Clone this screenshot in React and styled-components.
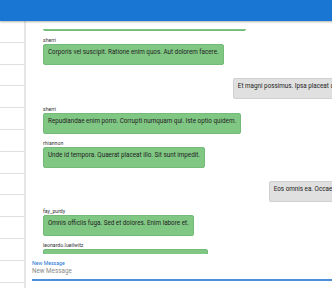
import React, { useLayoutEffect, useRef } from 'react'
import styled, { createGlobalStyle } from 'styled-components'

const GlobalStyle = createGlobalStyle`
    html, body {
        margin: 0;
        padding: 0;
        overflow: hidden;
        background: #fff;
    }
    body {
        font-family: Roboto, "Liberation Sans", sans-serif;
    }
`

const Page = styled.div`
    width: 422px;
    height: 288px;
    display: flex;
    flex-direction: column;
`

const AppBar = styled.header`
    height: 21px;
    flex-shrink: 0;
    background-color: #1976d2;
    box-shadow: 0 1px 2px rgba(0, 0, 0, 0.3);
    position: relative;
    z-index: 1;
`

const Body = styled.div`
    flex: 1;
    display: flex;
    min-height: 0;
`

const Sidebar = styled.nav`
    width: 24px;
    flex-shrink: 0;
    border-right: 2px solid #e6e6e6;
    display: flex;
    flex-direction: column;
    overflow: hidden;
`

const SidebarRow = styled.div`
    height: 20.8px;
    flex-shrink: 0;
    border-bottom: 1px solid #e0e0e0;
`

const Chat = styled.main`
    flex: 1;
    display: flex;
    flex-direction: column;
    padding: 8px 0 0 6px;
    min-width: 0;
    min-height: 0;
`

const MessageList = styled.div`
    flex: 1;
    min-height: 0;
    overflow: hidden;
    padding-left: 11px;
    display: flex;
    flex-direction: column;
`

const Message = styled.div`
    display: flex;
    flex-direction: column;
    align-items: ${p => (p.$own ? 'flex-end' : 'flex-start')};
    margin-bottom: 6.2px;
    flex-shrink: 0;
`

const Author = styled.div`
    font-size: 5.2px;
    line-height: 7px;
    height: 7px;
    color: #333;
`

const Bubble = styled.div`
    font-size: 6.3px;
    line-height: 8px;
    color: #222;
    padding: 3px 4px 10px;
    border-radius: 2px;
    white-space: nowrap;
    background-color: ${p => (p.$own ? '#e0e0e0' : '#81c784')};
    border: 1px solid ${p => (p.$own ? '#d0d0d0' : '#74bb78')};
    box-sizing: border-box;
    height: 21px;
`

const Composer = styled.div`
    flex-shrink: 0;
    padding: 6px 0 3px;
    border-bottom: 2px solid #4a8fd8;
    margin-bottom: 7px;
`

const ComposerLabel = styled.div`
    font-size: 5.2px;
    line-height: 7px;
    color: #1976d2;
`

const ComposerInput = styled.input`
    display: block;
    width: 100%;
    border: none;
    outline: none;
    padding: 0;
    font-family: inherit;
    font-size: 6.3px;
    line-height: 9px;
    height: 9px;
    color: #333;
    background: transparent;

    &::placeholder {
        color: #8a8a8a;
    }
`

const messages = [
    { id: 0, author: 'mariano', text: 'Voluptas aut quia. Dolores ut est. Nihil sit molestiae quia velit eum ut.' },
    { id: 1, author: 'sherri', text: 'Corporis vel suscipit. Ratione enim quos. Aut dolorem facere.' },
    { id: 2, own: true, text: 'Et magni possimus. Ipsa placeat autem. Fuga sed illo aut rerum.' },
    { id: 3, author: 'sherri', text: 'Repudiandae enim porro. Corrupti numquam qui. Iste optio quidem.' },
    { id: 4, author: 'rhiannon', text: 'Unde id tempora. Quaerat placeat illo. Sit sunt impedit.' },
    { id: 5, own: true, text: 'Eos omnis ea. Occaecati nam illum. Sint est autem.' },
    { id: 6, author: 'fay_purdy', text: 'Omnis officiis fuga. Sed et dolores. Enim labore et.' },
    { id: 7, author: 'leonardo.lueilwitz', text: 'Dolorem non velit. Magnam non ipsum. Iusto tenetur in.' },
    { id: 8, author: 'kaci', text: 'Quo dolor ut. Ea sed rerum. Vel quas magni.' },
]

const App = () => {
    const listRef = useRef(null)

    useLayoutEffect(() => {
        const list = listRef.current
        const first = list.firstChild
        // scrolled so only the tail of the first bubble peeks out at the top
        list.scrollTop = first.offsetTop + first.offsetHeight - list.offsetTop - 2
    }, [])

    return (
        <Page>
            <GlobalStyle />
            <AppBar />
            <Body>
                <Sidebar>
                    {Array.from({ length: 14 }).map((_, i) => (
                        <SidebarRow key={i} />
                    ))}
                </Sidebar>
                <Chat>
                    <MessageList ref={listRef}>
                        {messages.map(m => (
                            <Message key={m.id} $own={m.own}>
                                <Author>{m.own ? '' : m.author}</Author>
                                <Bubble $own={m.own}>{m.text}</Bubble>
                            </Message>
                        ))}
                    </MessageList>
                    <Composer>
                        <ComposerLabel>New Message</ComposerLabel>
                        <ComposerInput placeholder="New Message" />
                    </Composer>
                </Chat>
            </Body>
        </Page>
    )
}

export default App
